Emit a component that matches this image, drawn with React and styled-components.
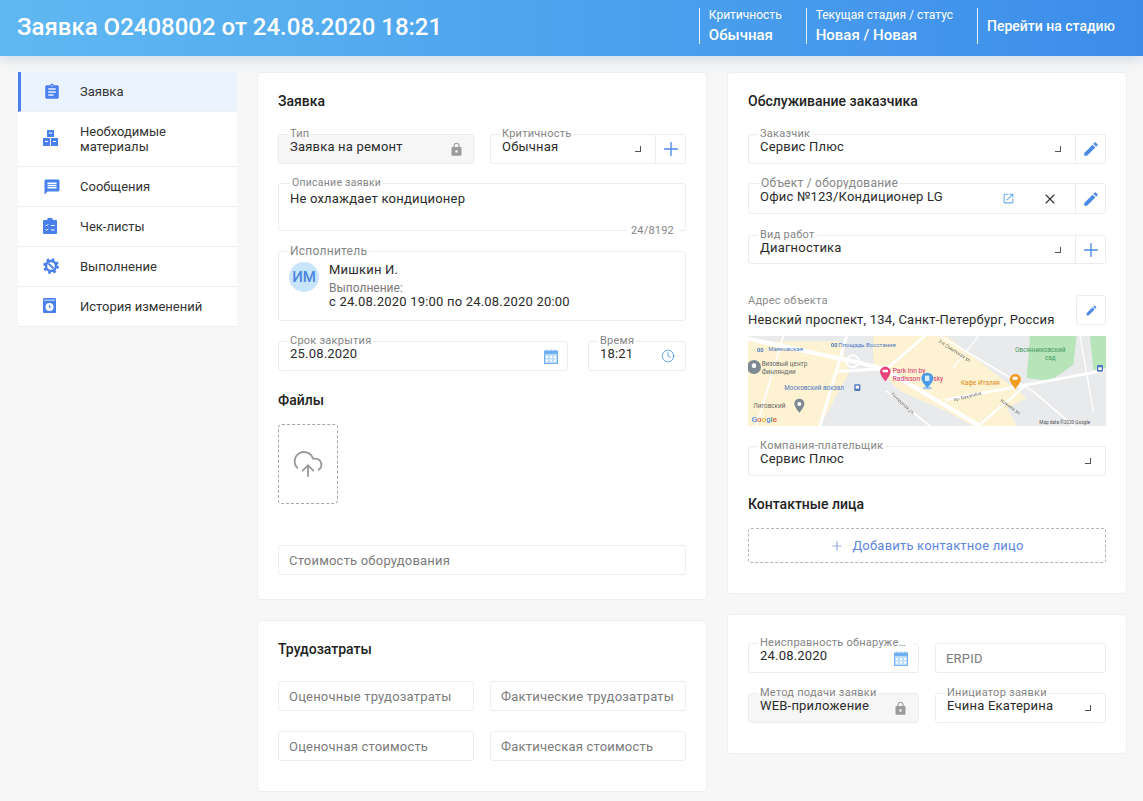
import React from 'react';
import styled, { createGlobalStyle } from 'styled-components';
import { MdAssignment, MdEdit, MdLock, MdMessage, MdOpenInNew } from 'react-icons/md';
import { Clock, CloudUpload, Plus, X } from 'lucide-react';

const GlobalStyle = createGlobalStyle`
  * { box-sizing: border-box; }
  html, body { margin: 0; background: #f7f7f7; }
  body {
    font-family: Roboto, "Liberation Sans", sans-serif;
    font-size: 13px;
    color: #2b2b2b;
  }
`;

const Header = styled.header`
  height: 56px;
  padding: 8px 28px 12px 17px;
  display: flex;
  align-items: stretch;
  justify-content: space-between;
  color: #fff;
  background: linear-gradient(90deg, #5fb8f1, #3c8dea);
  box-shadow: 0 3px 12px rgba(90, 140, 190, .28);
`;

const PageTitle = styled.h1`
  margin: 0;
  font-size: 24px;
  line-height: 38px;
  font-weight: 500;
`;

const HeaderInfo = styled.div`
  display: flex;
`;

const InfoBlock = styled.div`
  border-left: 1px solid rgba(255, 255, 255, .85);
  padding: 0 24px 0 9px;
  display: flex;
  flex-direction: column;
  justify-content: space-between;
`;

const InfoLabel = styled.span`
  font-size: 12px;
  line-height: 14px;
`;

const InfoValue = styled.span`
  font-size: 15px;
  line-height: 18px;
  font-weight: 500;
`;

const StageLink = styled.a`
  border-left: 1px solid rgba(255, 255, 255, .85);
  padding-left: 9px;
  font-size: 14px;
  line-height: 36px;
  font-weight: 500;
`;

const Layout = styled.div`
  display: flex;
  align-items: flex-start;
  padding: 16px 0 9px 18px;
`;

const Sidebar = styled.nav`
  width: 219px;
  margin-right: 20px;
  background: #fff;
`;

const MenuItem = styled.a`
  height: ${p => (p.$tall ? 55 : 40)}px;
  padding-left: ${p => (p.$active ? 22 : 25)}px;
  display: flex;
  align-items: center;
  line-height: 15px;
  color: #333;
  background: ${p => (p.$active ? '#ebf3fe' : '#fff')};
  border-left: ${p => (p.$active ? '3px solid #4b80ec' : 'none')};
  border-bottom: 1px solid #eeeeee;
`;

const MenuIcon = styled.span`
  width: 37px;
  height: 18px;
  flex: none;
  display: flex;
  color: #4a80ec;
`;

const Column = styled.div`
  width: ${p => p.$width}px;
  margin-right: ${p => p.$gap || 0}px;
  display: flex;
  flex-direction: column;
  gap: 20px;
`;

const Card = styled.section`
  padding: ${p => p.$top ?? 18}px 20px ${p => p.$bottom}px;
  background: #fff;
  border: 1px solid #efefef;
  border-radius: 4px;
`;

const SectionTitle = styled.h2`
  margin: ${p => p.$mt || 0}px 0 0;
  font-size: 14px;
  line-height: 20px;
  font-weight: 500;
  color: #222;
`;

const Row = styled.div`
  margin-top: ${p => p.$mt || 0}px;
  display: grid;
  grid-template-columns: ${p => p.$columns || '1fr 1fr'};
  column-gap: ${p => p.$gap ?? 16}px;
`;

const Field = styled.div`
  position: relative;
  margin-top: ${p => p.$mt || 0}px;
  height: ${p => p.$height || 30}px;
  display: flex;
  align-items: ${p => p.$align || 'center'};
  background: ${p => (p.$disabled ? '#f6f6f6' : '#fff')};
  border: 1px solid #ececec;
  border-radius: 3px;
`;

const FieldLabel = styled.label`
  position: absolute;
  top: -7px;
  left: ${p => p.$left ?? 9}px;
  max-width: calc(100% - 14px);
  padding: 0 2px;
  font-size: ${p => p.$size || 11}px;
  line-height: 12px;
  letter-spacing: .25px;
  white-space: nowrap;
  overflow: hidden;
  text-overflow: ellipsis;
  color: #858585;
  background: linear-gradient(#fff 60%, transparent 60%);
`;

const Value = styled.div`
  flex: 1;
  min-width: 0;
  padding: ${p => (p.$multiline ? '7px 0 0 11px' : '0 0 4px 11px')};
  line-height: 16px;
  letter-spacing: .2px;
  white-space: nowrap;
`;

const Corner = styled.i`
  width: 6px;
  height: 6px;
  margin-right: 14px;
  flex: none;
  border-right: 1px solid #555;
  border-bottom: 1px solid #555;
`;

const FieldIcon = styled.span`
  margin-right: ${p => p.$mr ?? 10}px;
  display: flex;
  flex: none;
  color: ${p => p.$color || '#9b9b9b'};
`;

const Addon = styled.button`
  width: 30px;
  height: 100%;
  padding: 0;
  flex: none;
  display: flex;
  align-items: center;
  justify-content: center;
  color: #4a8be6;
  background: #fff;
  border: 0;
  border-left: 1px solid #ececec;
  border-radius: 0 3px 3px 0;
`;

const Counter = styled.span`
  position: absolute;
  right: 7px;
  bottom: -7px;
  padding: 0 4px;
  font-size: 11px;
  line-height: 13px;
  letter-spacing: .2px;
  color: #858585;
  background: #fff;
`;

const TextInput = styled.input`
  display: block;
  width: 100%;
  margin-top: ${p => p.$mt || 0}px;
  height: 30px;
  padding: 0 10px;
  font: inherit;
  letter-spacing: .2px;
  background: #fff;
  border: 1px solid #ececec;
  border-radius: 3px;
  outline: none;
  &::placeholder { color: #7b7b7b; opacity: 1; }
`;

const Avatar = styled.div`
  width: 30px;
  height: 30px;
  margin: 10px 10px 0 10px;
  flex: none;
  display: flex;
  align-items: center;
  justify-content: center;
  border-radius: 50%;
  font-size: 15px;
  font-weight: 500;
  color: #4a85e0;
  background: #c9e5fc;
`;

const Executor = styled.div`
  padding-top: 10px;
`;

const ExecutorName = styled.div`
  line-height: 16px;
  letter-spacing: .2px;
`;

const ExecutorCaption = styled.div`
  margin-top: 3px;
  font-size: 12px;
  line-height: 14px;
  color: #7b7b7b;
`;

const ExecutorDates = styled.div`
  line-height: 14px;
  letter-spacing: .2px;
`;

const Dropzone = styled.div`
  width: 60px;
  height: 80px;
  margin-top: 14px;
  display: flex;
  align-items: center;
  justify-content: center;
  color: #9a9a9a;
  border: 1px dashed #a8a8a8;
  border-radius: 4px;
`;

const Address = styled.div`
  margin-top: 31px;
  display: flex;
  justify-content: space-between;
`;

const AddressCaption = styled.div`
  font-size: 11px;
  line-height: 12px;
  letter-spacing: .25px;
  color: #8c8c8c;
`;

const AddressText = styled.div`
  margin-top: 5px;
  line-height: 16px;
  letter-spacing: .2px;
`;

const SquareButton = styled.button`
  width: 30px;
  height: 30px;
  padding: 0;
  display: flex;
  align-items: center;
  justify-content: center;
  color: #4a8be6;
  background: #fff;
  border: 1px solid #ececec;
  border-radius: 3px;
`;

const MapBox = styled.svg`
  display: block;
  width: 358px;
  height: 90px;
  margin-top: 8px;
  filter: blur(.3px);
`;

const AddContact = styled.button`
  width: 100%;
  height: 35px;
  margin-top: 14px;
  display: flex;
  align-items: center;
  justify-content: center;
  gap: 8px;
  font: inherit;
  letter-spacing: .2px;
  color: #5d86dc;
  background: #fff;
  border: 1px dashed #b5b5b5;
  border-radius: 3px;
  svg { color: #8fa9e8; }
`;

const CalendarIcon = () => (
  <svg width="14" height="15" viewBox="0 0 14 15">
    <rect x="0.5" y="2" width="13" height="12.5" fill="#bddcf8" stroke="#6fb0f0" />
    <rect x="0" y="2" width="14" height="3" fill="#6fb0f0" />
    <path d="M3 0.5v2.5M7 0.5v2.5M11 0.5v2.5" stroke="#6fb0f0" />
    <path d="M2 7h2v2H2zM6 7h2v2H6zM10 7h2v2h-2zM2 10.5h2v2H2zM6 10.5h2v2H6zM10 10.5h2v2h-2z" fill="#fff" />
  </svg>
);

const BoxesIcon = () => (
  <svg width="15" height="16" viewBox="0 0 15 16" fill="currentColor">
    <path d="M4 0h7v7H4zM0 8h7v8H0zM8 8h7v8H8z" />
    <path d="M6 2.5h3v1H6zM2 11h3v1H2zM10 11h3v1h-3z" fill="#fff" />
  </svg>
);

const ChecklistIcon = () => (
  <svg width="14" height="16" viewBox="0 0 14 16">
    <path d="M1 2h3.2a2.8 2.8 0 0 1 5.6 0H13a1 1 0 0 1 1 1v12a1 1 0 0 1-1 1H1a1 1 0 0 1-1-1V3a1 1 0 0 1 1-1z" fill="currentColor" />
    <path d="M2.5 7l1 1 1.7-1.800M2.500 11.500l1 1 1.700-1.800M8 7.500h3.500M8 12h3.500" fill="none" stroke="#fff" />
  </svg>
);

const GearIcon = () => (
  <svg width="16" height="16" viewBox="0 0 16 16" fill="none" stroke="currentColor">
    <circle cx="8" cy="8" r="5" strokeWidth="2.400" />
    <circle cx="8" cy="8" r="6.500" strokeWidth="2.800" strokeDasharray="2.550 2.550" />
    <path d="M5.500 5.500l5 5" strokeWidth="1.800" />
  </svg>
);

const HistoryIcon = () => (
  <svg width="13" height="15" viewBox="0 0 13 15">
    <rect width="13" height="15" rx="1" fill="currentColor" />
    <rect x="1" y="1.500" width="11" height="1.500" fill="#a9c4f6" />
    <circle cx="6.500" cy="9" r="4" fill="#fff" />
    <path d="M6.500 7v2.200h1.800" fill="none" stroke="#4a80ec" />
  </svg>
);

const menu = [
  { title: 'Заявка', icon: <MdAssignment size={18} />, active: true },
  { title: <>Необходимые<br />материалы</>, icon: <BoxesIcon />, tall: true },
  { title: 'Сообщения', icon: <MdMessage size={18} /> },
  { title: 'Чек-листы', icon: <ChecklistIcon /> },
  { title: 'Выполнение', icon: <GearIcon /> },
  { title: 'История изменений', icon: <HistoryIcon /> },
];

const mapLabels = [
  { x: 85, y: 70, color: '#4d78c4', size: 18, text: 'Маяковская' },
  { x: 295, y: 57, color: '#4d78c4', size: 18, text: 'Площадь Восстания' },
  { x: 65, y: 113, color: '#666', size: 19, text: 'Визовый центр' },
  { x: 65, y: 138, color: '#666', size: 19, text: 'Финляндии' },
  { x: 133, y: 187, color: '#4d78c4', size: 19, text: 'Московский вокзал' },
  { x: 40, y: 241, color: '#666', size: 19, text: 'Лиговский' },
  { x: 458, y: 136, color: '#d9306e', size: 20, text: 'Park Inn by' },
  { x: 458, y: 160, color: '#d9306e', size: 20, text: 'Radisson Nevsky' },
  { x: 663, y: 170, color: '#e08a20', size: 19, text: 'Кафе Италия' },
  { x: 825, y: 72, color: '#3f9a5f', size: 19, text: 'Овсянниковский' },
  { x: 915, y: 97, color: '#3f9a5f', size: 19, text: 'сад' },
  { x: 898, y: 288, color: '#555', size: 14, text: 'Map data ©2020 Google' },
];

const mapStreets = [
  { x: 595, y: 42, angle: 33, text: '2-я Советская ул.' },
  { x: 452, y: 200, angle: 42, text: 'Гончарная ул.' },
  { x: 642, y: 220, angle: -14, text: 'пр. Бакунина' },
  { x: 780, y: 220, angle: 35, text: 'Кожина ул.' },
];

const StreetMap = () => (
  <MapBox viewBox="24 24 1074 270" preserveAspectRatio="none">
    <rect x="24" y="24" width="1074" height="270" fill="#e9eaec" />
    <path d="M24 40 L300 40 L330 130 L240 294 L24 294 Z" fill="#fdf3d2" />
    <path d="M400 24 L620 24 L860 210 L700 294 L620 250 L480 190 L400 110 Z" fill="#fdf3d2" />
    <path d="M720 294 L790 220 L830 294 Z" fill="#fdf3d2" />
    <path d="M870 24 L1010 24 L1000 110 L930 160 L860 150 Z" fill="#b7e4b9" />
    <path d="M1050 24 L1098 24 L1098 120 L1060 125 Z" fill="#b7e4b9" />
    <g fill="none" stroke="#fff" strokeLinecap="round">
      <path d="M24 32 L340 100 L430 122 L720 294" strokeWidth="13" />
      <path d="M430 122 L300 130 M320 24 L240 294" strokeWidth="9" />
      <path d="M555 24 L440 122" strokeWidth="8" />
      <path d="M620 215 L1090 128" strokeWidth="8" />
      <path d="M860 170 L715 294" strokeWidth="7" />
      <path d="M600 24 L880 190 L1000 294" strokeWidth="5" />
      <path d="M715 24 L640 120 M1020 24 L1060 250" strokeWidth="4" />
      <path d="M130 24 L50 294 M440 190 L570 294" strokeWidth="5" />
      <circle cx="338" cy="100" r="18" strokeWidth="6" />
    </g>
    {mapLabels.map(item => (
      <text key={item.text} x={item.x} y={item.y} fill={item.color} fontSize={item.size} fontFamily="Roboto, sans-serif">
        {item.text}
      </text>
    ))}
    {mapStreets.map(item => (
      <text
        key={item.text}
        x={item.x}
        y={item.y}
        fill="#666"
        fontSize="14"
        fontFamily="Roboto, sans-serif"
        transform={`rotate(${item.angle} ${item.x} ${item.y})`}
      >
        {item.text}
      </text>
    ))}
    <path d="M42 96a15 15 0 0 1 0 42a15 15 0 0 1 0-42z" fill="#7d8a92" />
    <circle cx="42" cy="113" r="7" fill="#fff" />
    <path d="M178 212c-11 0-15 9-15 15 0 9 15 27 15 27s15-18 15-27c0-6-4-15-15-15z" fill="#7d8a92" />
    <circle cx="178" cy="228" r="6" fill="#fff" />
    <path d="M436 116c-10 0-16 8-16 15 0 9 16 29 16 29s16-20 16-29c0-7-6-15-16-15z" fill="#e6447d" />
    <rect x="428" y="125" width="16" height="8" rx="2" fill="#fff" />
    <ellipse cx="562" cy="180" rx="14" ry="4" fill="#9cc6ee" />
    <path d="M562 134c-12 0-18 9-18 17 0 11 18 29 18 29s18-18 18-29c0-8-6-17-18-17z" fill="#4a9bea" />
    <rect x="555" y="143" width="13" height="16" fill="#d8ecfc" />
    <path d="M826 138c-10 0-17 8-17 16 0 10 17 29 17 29s17-19 17-29c0-8-7-16-17-16z" fill="#ef9d22" />
    <rect x="818" y="146" width="15" height="9" rx="3" fill="#fff" />
    <rect x="343" y="169" width="18" height="20" rx="3" fill="#4d78c4" />
    <rect x="347" y="173" width="10" height="9" fill="#fff" />
    <rect x="1071" y="111" width="18" height="20" rx="3" fill="#4d78c4" />
    <rect x="1075" y="118" width="10" height="8" fill="#fff" />
    <text x="61" y="71" fill="#4d78c4" fontSize="17" fontWeight="700" textAnchor="middle" fontFamily="Roboto, sans-serif">00</text>
    <text x="283" y="58" fill="#4d78c4" fontSize="17" fontWeight="700" textAnchor="middle" fontFamily="Roboto, sans-serif">00</text>
    <text x="35" y="281" fontSize="24" fontWeight="500" fontFamily="Roboto, sans-serif">
      <tspan fill="#4d84ea">G</tspan>
      <tspan fill="#e0503f">o</tspan>
      <tspan fill="#e8b42c">o</tspan>
      <tspan fill="#4d84ea">g</tspan>
      <tspan fill="#4aa356">l</tspan>
      <tspan fill="#e0503f">e</tspan>
    </text>
  </MapBox>
);

const App = () => (
  <>
    <GlobalStyle />
    <Header>
      <PageTitle>Заявка О2408002 от 24.08.2020 18:21</PageTitle>
      <HeaderInfo>
        <InfoBlock>
          <InfoLabel>Критичность</InfoLabel>
          <InfoValue>Обычная</InfoValue>
        </InfoBlock>
        <InfoBlock>
          <InfoLabel>Текущая стадия / статус</InfoLabel>
          <InfoValue>Новая / Новая</InfoValue>
        </InfoBlock>
        <StageLink>Перейти на стадию</StageLink>
      </HeaderInfo>
    </Header>

    <Layout>
      <Sidebar>
        {menu.map((item, index) => (
          <MenuItem key={index} $active={item.active} $tall={item.tall}>
            <MenuIcon>{item.icon}</MenuIcon>
            {item.title}
          </MenuItem>
        ))}
      </Sidebar>

      <Column $width={450} $gap={20}>
        <Card $bottom={24}>
          <SectionTitle>Заявка</SectionTitle>
          <Row $mt={23}>
            <Field $disabled>
              <FieldLabel>Тип</FieldLabel>
              <Value>Заявка на ремонт</Value>
              <FieldIcon $mr={9}><MdLock size={15} /></FieldIcon>
            </Field>
            <Field>
              <FieldLabel>Критичность</FieldLabel>
              <Value>Обычная</Value>
              <Corner />
              <Addon><Plus size={22} strokeWidth={1.5} /></Addon>
            </Field>
          </Row>
          <Field $mt={19} $height={48} $align="flex-start">
            <FieldLabel $left={11} $size={10.5}>Описание заявки</FieldLabel>
            <Value $multiline>Не охлаждает кондиционер</Value>
            <Counter>24/8192</Counter>
          </Field>
          <Field $mt={20} $height={70} $align="flex-start">
            <FieldLabel $left={9} $size={12}>Исполнитель</FieldLabel>
            <Avatar>ИМ</Avatar>
            <Executor>
              <ExecutorName>Мишкин И.</ExecutorName>
              <ExecutorCaption>Выполнение:</ExecutorCaption>
              <ExecutorDates>с 24.08.2020 19:00 по 24.08.2020 20:00</ExecutorDates>
            </Executor>
          </Field>
          <Row $mt={20} $columns="290px 98px" $gap={20}>
            <Field>
              <FieldLabel>Срок закрытия</FieldLabel>
              <Value>25.08.2020</Value>
              <FieldIcon $mr={9}><CalendarIcon /></FieldIcon>
            </Field>
            <Field>
              <FieldLabel>Время</FieldLabel>
              <Value>18:21</Value>
              <FieldIcon $mr={10} $color="#5a9fec"><Clock size={14} strokeWidth={1.6} /></FieldIcon>
            </Field>
          </Row>
          <SectionTitle $mt={19}>Файлы</SectionTitle>
          <Dropzone><CloudUpload size={32} strokeWidth={1.4} /></Dropzone>
          <TextInput $mt={41} placeholder="Стоимость оборудования" />
        </Card>

        <Card $bottom={30}>
          <SectionTitle>Трудозатраты</SectionTitle>
          <Row $mt={22}>
            <TextInput placeholder="Оценочные трудозатраты" />
            <TextInput placeholder="Фактические трудозатраты" />
          </Row>
          <Row $mt={20}>
            <TextInput placeholder="Оценочная стоимость" />
            <TextInput placeholder="Фактическая стоимость" />
          </Row>
        </Card>
      </Column>

      <Column $width={400}>
        <Card $bottom={30}>
          <SectionTitle>Обслуживание заказчика</SectionTitle>
          <Field $mt={23}>
            <FieldLabel>Заказчик</FieldLabel>
            <Value>Сервис Плюс</Value>
            <Corner />
            <Addon><MdEdit size={18} /></Addon>
          </Field>
          <Field $mt={19} $height={31}>
            <FieldLabel $left={10} $size={12}>Объект / оборудование</FieldLabel>
            <Value>Офис №123/Кондиционер LG</Value>
            <FieldIcon $mr={27} $color="#6aaef0"><MdOpenInNew size={13} /></FieldIcon>
            <FieldIcon $mr={17} $color="#333"><X size={16} strokeWidth={1.6} /></FieldIcon>
            <Addon><MdEdit size={18} /></Addon>
          </Field>
          <Field $mt={21} $height={29}>
            <FieldLabel>Вид работ</FieldLabel>
            <Value>Диагностика</Value>
            <Corner />
            <Addon><Plus size={22} strokeWidth={1.5} /></Addon>
          </Field>
          <Address>
            <div>
              <AddressCaption>Адрес объекта</AddressCaption>
              <AddressText>Невский проспект, 134, Санкт-Петербург, Россия</AddressText>
            </div>
            <SquareButton><MdEdit size={13} /></SquareButton>
          </Address>
          <StreetMap />
          <Field $mt={20}>
            <FieldLabel>Компания-плательщик</FieldLabel>
            <Value>Сервис Плюс</Value>
            <Corner />
          </Field>
          <SectionTitle $mt={18}>Контактные лица</SectionTitle>
          <AddContact><Plus size={14} />Добавить контактное лицо</AddContact>
        </Card>

        <Card $top={28} $bottom={30}>
          <Row>
            <Field>
              <FieldLabel>Неисправность обнаружена</FieldLabel>
              <Value>24.08.2020</Value>
              <FieldIcon $mr={10}><CalendarIcon /></FieldIcon>
            </Field>
            <TextInput placeholder="ERPID" />
          </Row>
          <Row $mt={20}>
            <Field $disabled>
              <FieldLabel>Метод подачи заявки</FieldLabel>
              <Value>WEB-приложение</Value>
              <FieldIcon $mr={10}><MdLock size={15} /></FieldIcon>
            </Field>
            <Field>
              <FieldLabel>Инициатор заявки</FieldLabel>
              <Value>Ечина Екатерина</Value>
              <Corner />
            </Field>
          </Row>
        </Card>
      </Column>
    </Layout>
  </>
);

export default App;
